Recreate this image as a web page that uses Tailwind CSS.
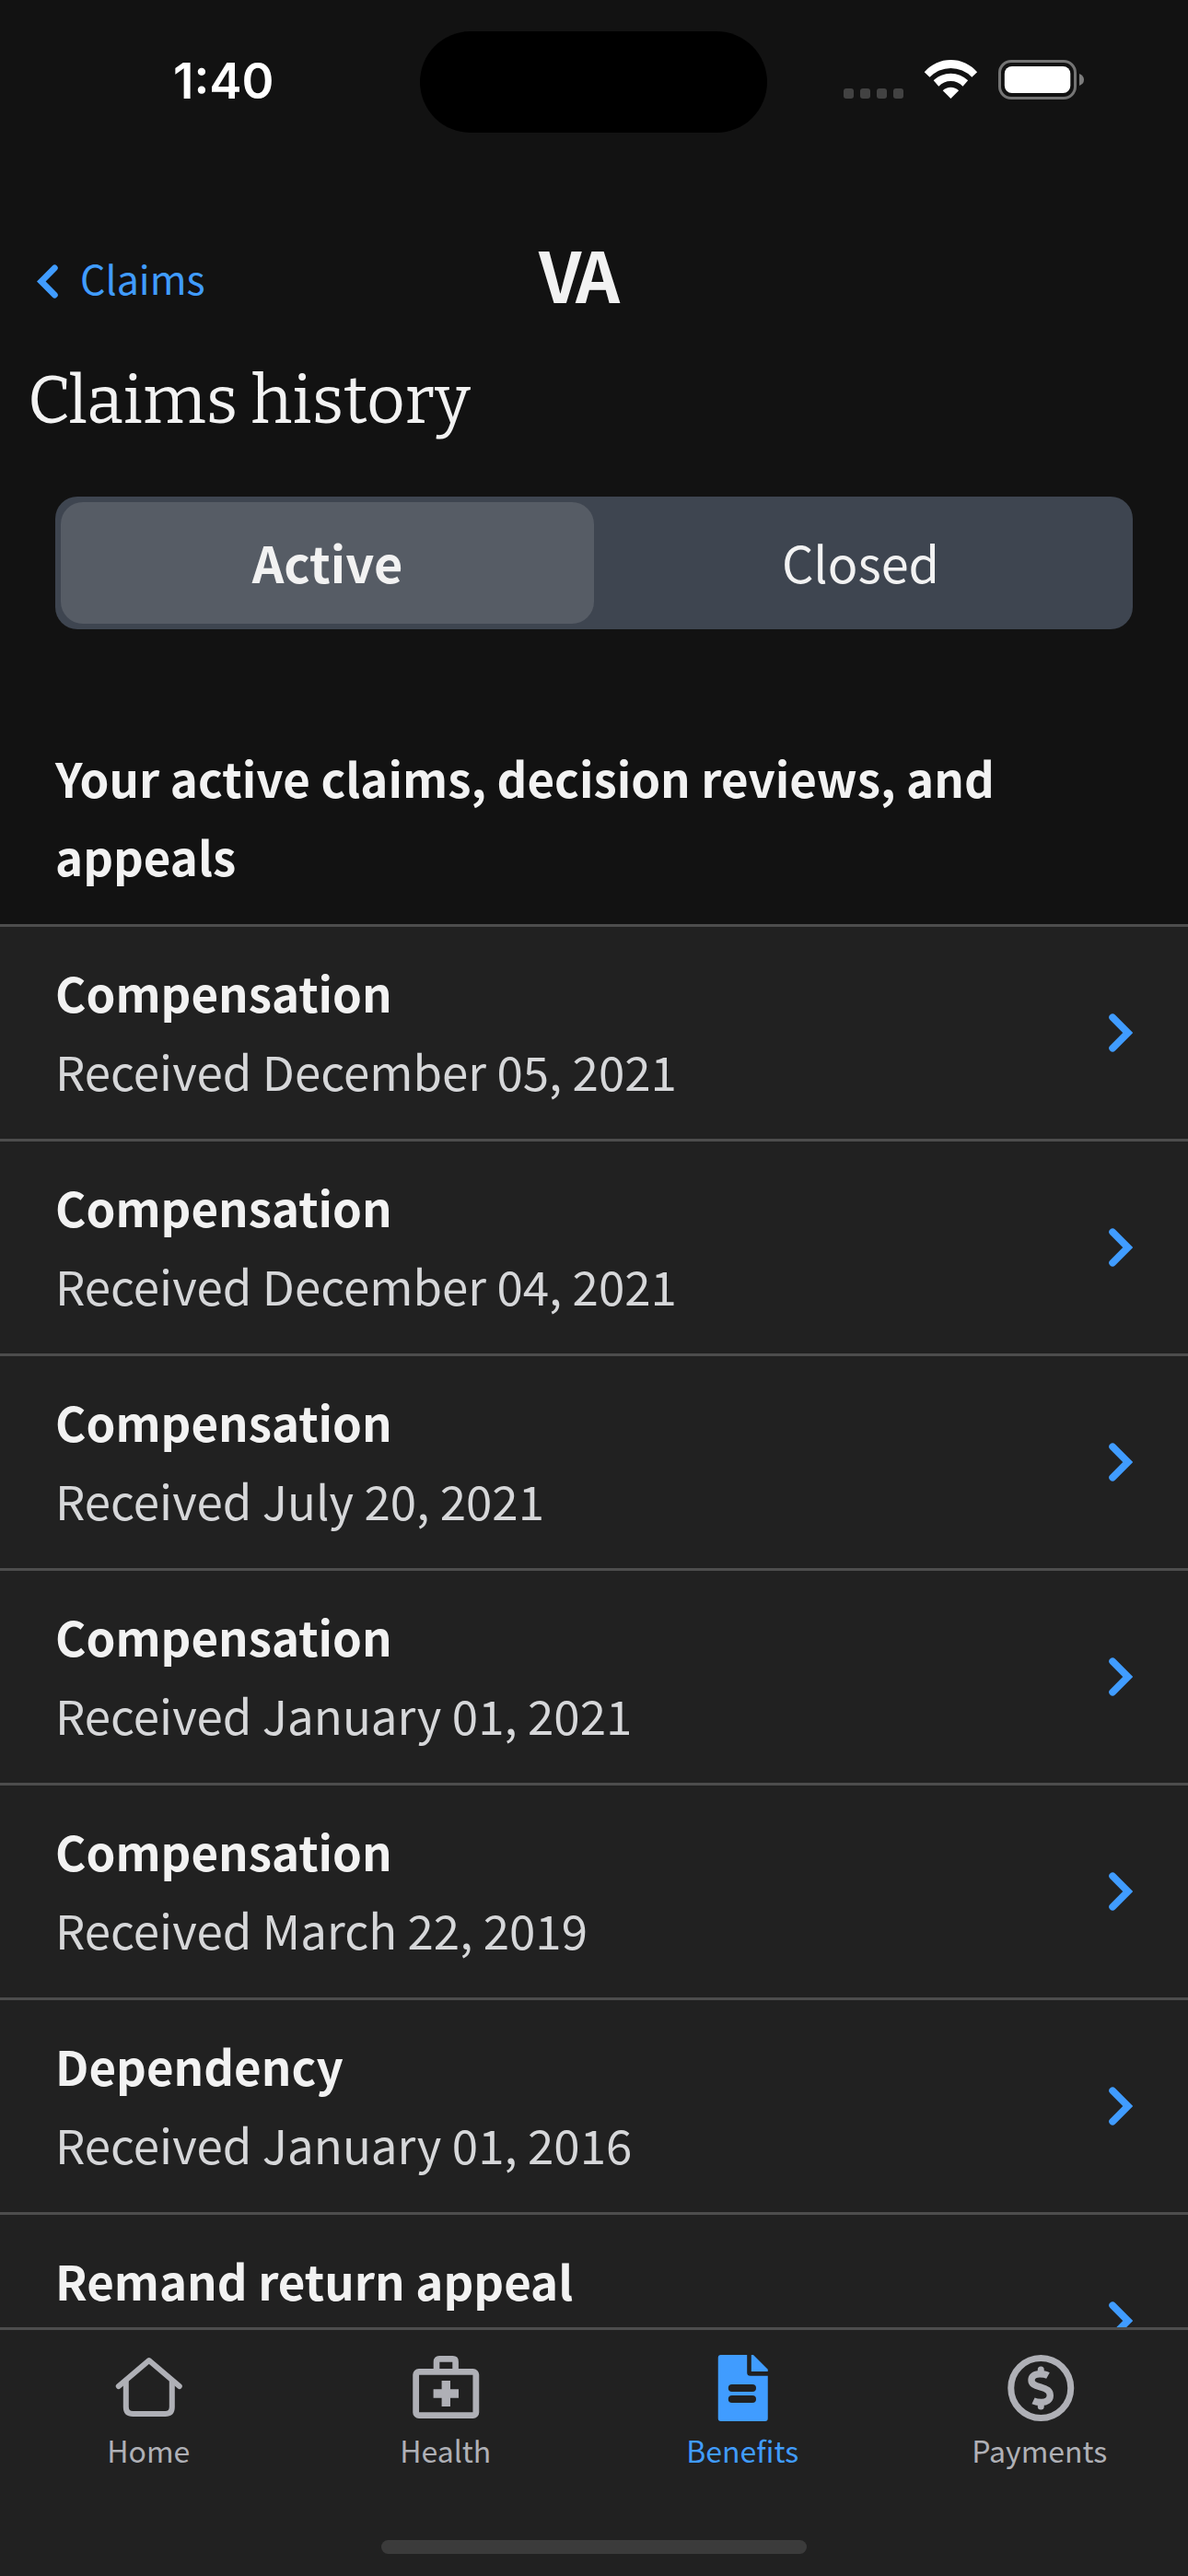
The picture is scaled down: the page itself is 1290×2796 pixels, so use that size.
<!DOCTYPE html>
<html lang="en">
<head>
<meta charset="utf-8">
<title>Claims history</title>
<script src="https://cdn.jsdelivr.net/npm/@tailwindcss/browser@4"></script>
</head>
<body class="bg-[#121212]">
<svg class="hidden">
  <symbol id="chevron" viewBox="0 0 26 42"><path d="M4.1 4.3 20.7 21 4.1 37.7" fill="none" stroke="currentColor" stroke-width="7.7" stroke-linecap="round" stroke-linejoin="miter"/></symbol>
</svg>
<div class="flex h-[2796px] w-[1290px] flex-col overflow-hidden bg-[#121212] font-['Noto_Sans_CJK_JP',sans-serif] text-[#f2f2f2]">

  <!-- Status bar -->
  <div class="flex h-[177px] shrink-0 items-start pt-[33px]">
    <div class="flex h-[111px] w-[456px] items-center pl-[188px] font-['Inter',sans-serif] text-[53px] font-semibold leading-none text-white">1:40</div>
    <div class="mt-px h-[110px] w-[377px] rounded-full bg-black"></div>
    <div class="ml-[83px] mt-[31px] flex h-11 items-center gap-[22px]">
      <svg class="h-11 w-[65px]" viewBox="0 0 65 44" fill="#424242"><rect y="32" width="11" height="11" rx="3"/><rect x="18" y="32" width="11" height="11" rx="3"/><rect x="36" y="32" width="11" height="11" rx="3"/><rect x="54" y="32" width="11" height="11" rx="3"/></svg>
      <svg class="h-11 w-[59px]" viewBox="0 0 59 44" fill="#fff"><path d="M.7 14.3A37.6 37.6 0 0 1 58.1 14.3L52.3 19.7A31.9 31.9 0 0 0 6.5 19.7Z"/><path d="M10.7 23.3A26.8 26.8 0 0 1 48.1 23.3L42.5 29.7A17.9 17.9 0 0 0 16.3 29.7Z"/><path d="M20.7 34.3A12.5 12.5 0 0 1 38.1 34.3L29.4 43Z"/></svg>
      <svg class="h-11 w-[93px]" viewBox="0 0 93 44"><rect x="1.5" y="2.5" width="82" height="40" rx="12.5" fill="none" stroke="#747474" stroke-width="3"/><rect x="6.8" y="8" width="71.5" height="29" rx="8" fill="#fff"/><path d="M88 16Q93 18 93 22.5T88 29Z" fill="#7c7c7c"/></svg>
    </div>
  </div>

  <!-- Header -->
  <header class="flex h-[215px] shrink-0 items-start pt-[69px]">
    <a class="flex h-[111px] w-[585px] items-center pl-10 text-[43px] leading-none text-[#409cff]">
      <svg class="mr-[24px] mt-[7px] h-[37px] w-[23px] -scale-x-100"><use href="#chevron"/></svg>Claims
    </a>
    <div class="text-[75px] font-bold leading-[101px] tracking-[-5px]">VA</div>
  </header>
  <h1 class="h-[86px] shrink-0 pl-[30px] font-['Bitter','Noto_Serif',serif] text-[72px] leading-[86px]">Claims history</h1>

  <!-- Segmented control -->
  <div class="mx-[60px] mt-[61px] flex h-36 shrink-0 rounded-[24px] bg-[#3e4550] p-1.5 text-[54px] leading-none">
    <div class="flex flex-1 items-center justify-center rounded-[24px] bg-[#565c65] pb-[3px] font-bold">Active</div>
    <div class="flex flex-1 items-center justify-center pb-[3px]">Closed</div>
  </div>

  <h2 class="mx-[60px] mb-[31px] mt-[119px] shrink-0 text-[51px] font-bold leading-[85px]">Your active claims, decision reviews, and appeals</h2>

  <!-- Claims list -->
  <main class="min-h-0 flex-1 overflow-hidden bg-[#212121] text-[51px] leading-[85px]" id="claims"></main>

  <!-- Tab bar -->
  <nav class="h-[270px] shrink-0 border-t-[3px] border-[#4d4d4d] bg-[#212121] pt-[27px]">
    <div class="grid grid-cols-4 text-[32px] leading-10 text-[#afb0b6]">
      <a class="flex flex-col items-center gap-[11px]">
        <svg class="size-[72px] overflow-visible" viewBox="0 0 72 72" fill="none" stroke="currentColor" stroke-width="6" stroke-linecap="round" stroke-linejoin="round"><path d="M3.8 34 36.8 6 69.8 34"/><path d="M11.8 27V56.5Q11.8 64 19.3 64H54.3Q61.8 64 61.8 56.5V27" stroke-linecap="butt"/></svg>
        <span>Home</span>
      </a>
      <a class="flex flex-col items-center gap-[11px]">
        <svg class="size-[72px] overflow-visible" viewBox="0 0 72 72" fill="none" stroke="currentColor" stroke-width="6.8"><rect x="3.65" y="18.4" width="65.2" height="47.2" rx="3.2"/><path d="M26 16V7.4Q26 4.4 29 4.4H43.6Q46.6 4.4 46.6 7.4V16" stroke-width="6.6"/><path d="M36.3 28V56M22.6 42H50" stroke-width="9.4"/></svg>
        <span>Health</span>
      </a>
      <a class="flex flex-col items-center gap-[11px] text-[#409cff]">
        <svg class="size-[72px]" viewBox="0 0 72 72" fill="currentColor"><path fill-rule="evenodd" d="M12.75 0H41.2V19.2Q41.2 22.7 44.7 22.7H63.75V69Q63.75 72 60.75 72H12.75Q9.75 72 9.75 69V3Q9.75 0 12.75 0ZM24.8 32a4 4 0 0 0 0 8H47a4 4 0 0 0 0-8ZM24.8 44a4 4 0 0 0 0 8H47a4 4 0 0 0 0-8Z"/><path d="M45.8 0H48L63.75 15.8V18H45.8Z"/></svg>
        <span>Benefits</span>
      </a>
      <a class="flex flex-col items-center gap-[11px]">
        <svg class="size-[72px] overflow-visible" viewBox="0 0 72 72" fill="none" stroke="currentColor" stroke-width="7"><circle cx="37.25" cy="36" r="32.5"/><path d="M45 22.5C42 20.8 39 20.7 36 20.7C30 20.7 27 23.5 27 27.3C27 31.5 30 33 37 35C44 37 47.3 39 47.3 44C47.3 49 43.5 51.4 38 51.4C34.5 51.4 32 51.2 29 49.8" stroke-width="7.4"/><path d="M37.25 16V19M37.25 53V56" stroke-linecap="round"/></svg>
        <span>Payments</span>
      </a>
    </div>
    <div class="mx-auto mt-[78px] h-[15px] w-[462px] rounded-full bg-[#3b3b3b]"></div>
  </nav>
</div>
<script>
const claims = [
  ['Compensation', 'Received December 05, 2021'],
  ['Compensation', 'Received December 04, 2021'],
  ['Compensation', 'Received July 20, 2021'],
  ['Compensation', 'Received January 01, 2021'],
  ['Compensation', 'Received March 22, 2019'],
  ['Dependency', 'Received January 01, 2016'],
  ['Remand return appeal', ''],
];
document.getElementById('claims').innerHTML = claims.map(([title, date]) => `
  <div class="flex h-[233px] items-center justify-between border-t-[3px] border-[#4d4d4d] px-[60px]">
    <div class="-mt-0.5 h-[170px]"><p class="font-bold">${title}</p><p class="text-[#d6d7d9]">${date}</p></div>
    <svg class="h-[42px] w-[26px] text-[#409cff]"><use href="#chevron"/></svg>
  </div>`).join('');
</script>
</body>
</html>
